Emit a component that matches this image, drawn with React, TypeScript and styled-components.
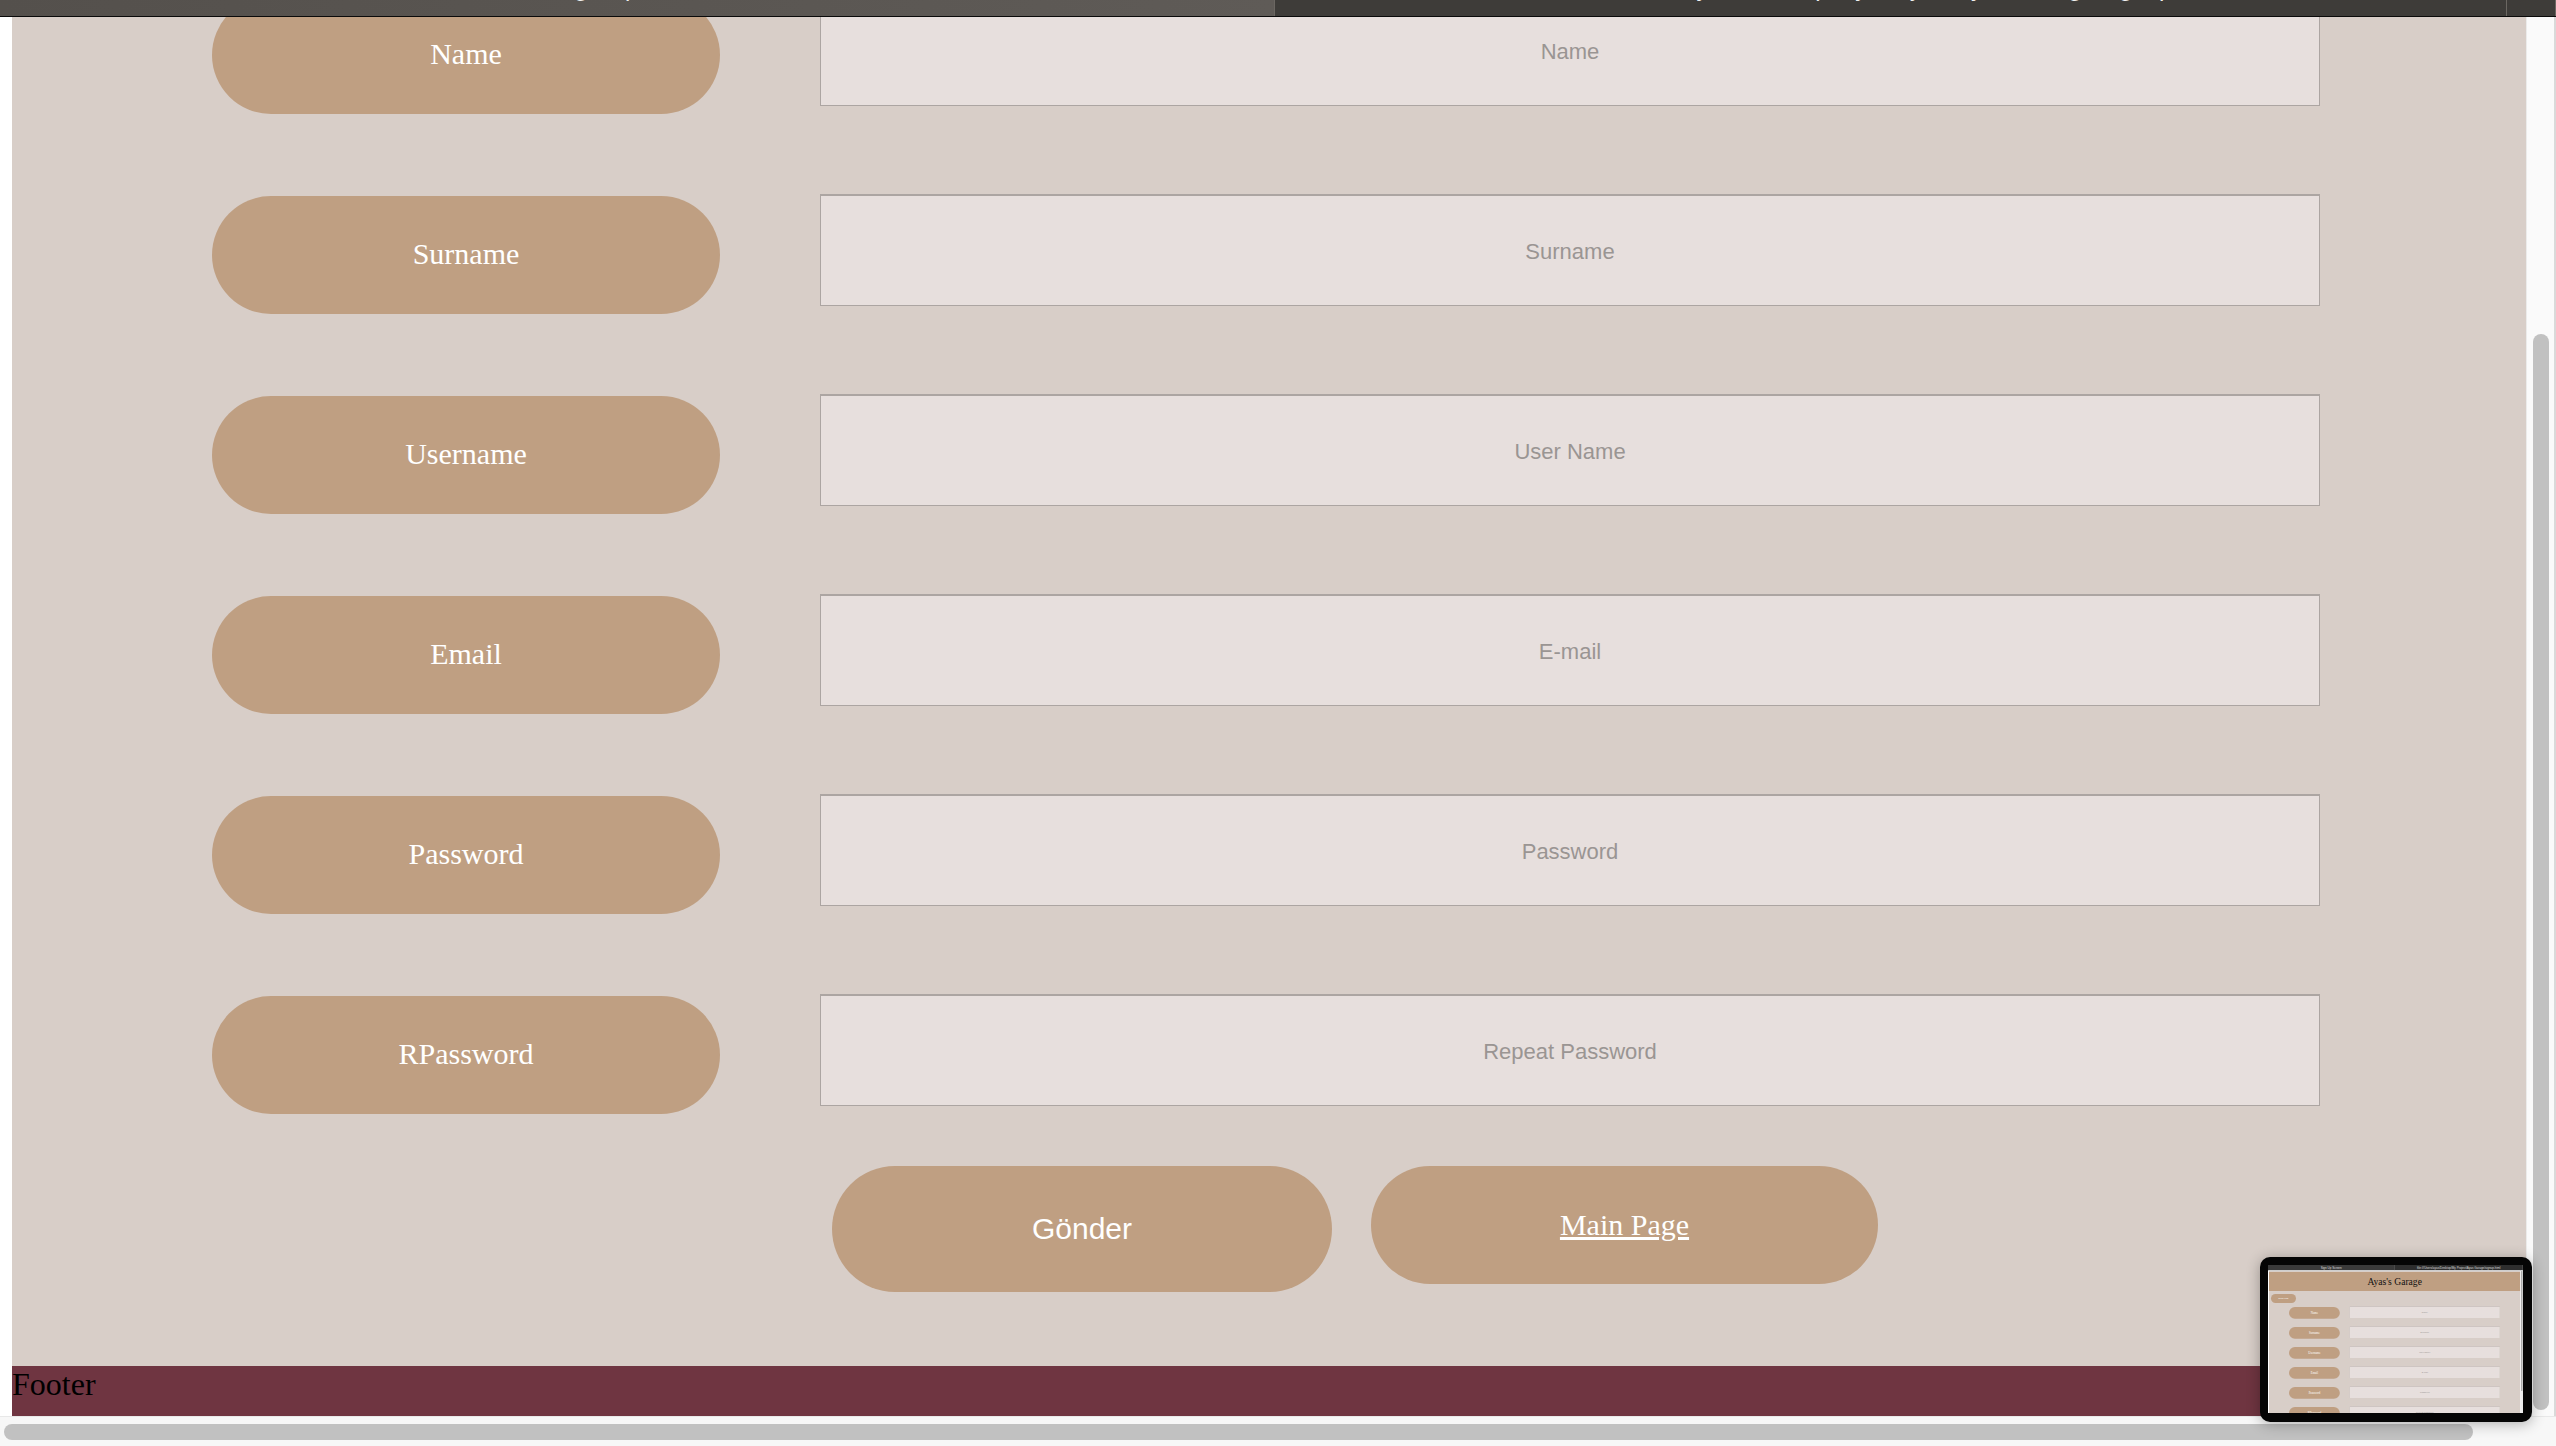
import React from "react";
import styled, { createGlobalStyle } from "styled-components";

const SERIF = `"Liberation Serif", "Times New Roman", serif`;
const SANS = `"Liberation Sans", Arial, sans-serif`;
const TAN = "#bf9f82";
const PAGE_BG = "#d8cec8";

const Global = createGlobalStyle`
  html, body { margin: 0; padding: 0; background: #fff; overflow: hidden; }
  #root { width: 2556px; height: 1446px; }
  * { box-sizing: border-box; }
`;

const Screen = styled.div`
  position: relative;
  width: 2556px;
  height: 1446px;
  display: flex;
  flex-direction: column;
  overflow: hidden;
  background: #fff;
`;

/* ---------- browser chrome ---------- */
const TabStrip = styled.div`
  height: 17px;
  flex: none;
  border-bottom: 1px solid #0a0a0a;
  display: grid;
  grid-template-columns: 1275px 1232px 1fr;
  background: #3e3c39;
  overflow: hidden;
`;

const Tab = styled.div<{ $active?: boolean }>`
  background: ${(p) => (p.$active ? "linear-gradient(90deg, #54504c, #5f5b57)" : "#3e3c39")};
  border-right: 1px solid #6b6762;
  display: flex;
  align-items: flex-start;
  justify-content: center;
  overflow: hidden;
`;

const TabTitle = styled.span`
  font: 24px/24px ${SANS};
  color: #f0f0f0;
  margin-top: -24px;
  white-space: nowrap;
`;

const Middle = styled.div`
  flex: 1;
  min-height: 0;
  display: flex;
`;

const LeftEdge = styled.div<{ $w: number }>`
  width: ${(p) => p.$w}px;
  flex: none;
  background: #fff;
`;

const Viewport = styled.div`
  flex: 1;
  min-width: 0;
  background: ${PAGE_BG};
  overflow: hidden;
  display: flex;
  flex-direction: column;
`;

const VTrack = styled.div`
  width: 30px;
  flex: none;
  background: #fafafa;
  border-left: 1px solid #ebebeb;
  border-right: 2px solid #d9d9d9;
  padding-top: 317px;
  display: flex;
  justify-content: center;
`;

const VThumb = styled.div`
  width: 16px;
  height: 1076px;
  border-radius: 8px;
  background: #c1c1c1;
`;

const HTrack = styled.div`
  height: 30px;
  flex: none;
  background: #f7f7f7;
  border-top: 1px solid #e8e8e8;
  padding: 7px 0 0 4px;
`;

const HThumb = styled.div`
  width: 2469px;
  height: 16px;
  border-radius: 8px;
  background: #c1c1c1;
`;

/* ---------- page ---------- */
const PageRoot = styled.div<{ $offset: number }>`
  width: 2514px;
  flex: none;
  margin-top: ${(p) => -p.$offset}px;
  padding-top: 10px;
  display: flex;
  flex-direction: column;
  background: ${PAGE_BG};
`;

const Header = styled.header`
  height: 190px;
  background: ${TAN};
  display: flex;
  align-items: center;
  justify-content: center;
`;

const Title = styled.h1`
  margin: 0;
  font: 400 96px/1 ${SERIF};
  color: #111;
`;

const NavRow = styled.nav`
  margin-top: 30px;
  padding-left: 20px;
  display: flex;
`;

const NavPill = styled.a`
  width: 250px;
  height: 90px;
  border-radius: 45px;
  background: ${TAN};
  color: #fff;
  font: 24px ${SERIF};
  display: flex;
  align-items: center;
  justify-content: center;
  text-decoration: none;
`;

const Form = styled.form`
  margin: 38px 0 0;
  display: flex;
  flex-direction: column;
  gap: 80px;
`;

const Row = styled.div`
  height: 120px;
  padding-left: 200px;
  display: flex;
  align-items: flex-start;
  gap: 100px;
`;

const LabelPill = styled.label`
  width: 508px;
  height: 118px;
  margin-top: 2px;
  padding-bottom: 2px;
  flex: none;
  border-radius: 59px;
  background: ${TAN};
  color: #fff;
  font: 30px ${SERIF};
  display: flex;
  align-items: center;
  justify-content: center;
`;

const Field = styled.input`
  width: 1500px;
  height: 112px;
  flex: none;
  margin: 0;
  padding: 2px 0 0;
  background: #e7dfdd;
  border: 1px solid #aca5a2;
  border-top-width: 2px;
  outline: none;
  text-align: center;
  font: 22px ${SANS};
  color: #333;
  &::placeholder {
    color: #9a9593;
  }
`;

const Actions = styled.div`
  margin-top: 52px;
  padding-left: 820px;
  display: flex;
  align-items: flex-start;
  gap: 39px;
`;

const SubmitButton = styled.button`
  width: 500px;
  height: 126px;
  border: none;
  border-radius: 63px;
  background: ${TAN};
  color: #fff;
  font: 30px ${SANS};
  padding: 0;
`;

const HomeLink = styled.a`
  width: 507px;
  height: 118px;
  border-radius: 59px;
  background: ${TAN};
  color: #fff;
  font: 30px ${SERIF};
  text-decoration: underline;
  display: flex;
  align-items: center;
  justify-content: center;
`;

const Footer = styled.footer`
  margin-top: 74px;
  height: 50px;
  background: #6f3541;
  color: #000;
  font: 32px/1.15 ${SERIF};
`;

/* ---------- screenshot thumbnail ---------- */
const MiniFrame = styled.div`
  position: absolute;
  left: 2260px;
  top: 1257px;
  width: 272px;
  height: 165px;
  padding: 8px 9px 9px 8px;
  background: #050505;
  border-radius: 10px;
  box-shadow: 0 2px 14px rgba(0, 0, 0, 0.3);
`;

const MiniScreen = styled.div`
  width: 255px;
  height: 148px;
  overflow: hidden;
  background: #fff;
`;

const MiniScaler = styled.div`
  width: 2550px;
  height: 1480px;
  transform: scale(0.1);
  transform-origin: 0 0;
  display: flex;
  flex-direction: column;
`;

const MiniChrome = styled.div`
  height: 60px;
  flex: none;
  display: grid;
  grid-template-columns: 1270px 1fr;
  background: #333;
  border-bottom: 8px solid #fff;
  overflow: hidden;
`;

const MiniTab = styled.div<{ $active?: boolean }>`
  background: ${(p) => (p.$active ? "#3a3a3a" : "#2e2e2e")};
  border-right: 6px solid #555;
  display: flex;
  align-items: center;
  justify-content: center;
  font: 30px ${SANS};
  color: #ddd;
  white-space: nowrap;
  overflow: hidden;
`;

const MiniBody = styled.div`
  flex: 1;
  min-height: 0;
  display: flex;
  overflow: hidden;
`;

const MiniViewport = styled.div`
  width: 2514px;
  flex: none;
  overflow: hidden;
  display: flex;
  flex-direction: column;
`;

const MiniTrack = styled.div`
  flex: 1;
  background: #ececec;
  padding: 0 8px;
  display: flex;
  justify-content: center;
`;

const MiniThumb = styled.div`
  width: 12px;
  height: 1200px;
  background: #9c9c9c;
  border-radius: 6px;
`;

const fields = [
  { label: "Name", placeholder: "Name", type: "text" },
  { label: "Surname", placeholder: "Surname", type: "text" },
  { label: "Username", placeholder: "User Name", type: "text" },
  { label: "Email", placeholder: "E-mail", type: "email" },
  { label: "Password", placeholder: "Password", type: "password" },
  { label: "RPassword", placeholder: "Repeat Password", type: "password" },
];

function Page({ offset }: { offset: number }) {
  return (
    <PageRoot $offset={offset}>
      <Header>
        <Title>Ayas's Garage</Title>
      </Header>
      <NavRow>
        <NavPill href="#">Main Page</NavPill>
      </NavRow>
      <Form onSubmit={(e) => e.preventDefault()}>
        {fields.map((f) => (
          <Row key={f.label}>
            <LabelPill>{f.label}</LabelPill>
            <Field type={f.type} placeholder={f.placeholder} />
          </Row>
        ))}
      </Form>
      <Actions>
        <SubmitButton type="button">Gönder</SubmitButton>
        <HomeLink href="#">Main Page</HomeLink>
      </Actions>
      <Footer>Footer</Footer>
    </PageRoot>
  );
}

export default function App() {
  return (
    <>
      <Global />
      <Screen>
        <TabStrip>
          <Tab $active>
            <TabTitle>Sign Up Screen</TabTitle>
          </Tab>
          <Tab>
            <TabTitle>file:///Users/ayas/Desktop/My Project/Ayas Garage/signup.html</TabTitle>
          </Tab>
          <Tab />
        </TabStrip>
        <Middle>
          <LeftEdge $w={12} />
          <Viewport>
            <Page offset={381} />
          </Viewport>
          <VTrack>
            <VThumb />
          </VTrack>
        </Middle>
        <HTrack>
          <HThumb />
        </HTrack>

        <MiniFrame>
          <MiniScreen>
            <MiniScaler>
              <MiniChrome>
                <MiniTab $active>Sign Up Screen</MiniTab>
                <MiniTab>file:///Users/ayas/Desktop/My Project/Ayas Garage/signup.html</MiniTab>
              </MiniChrome>
              <MiniBody>
                <LeftEdge $w={10} />
                <MiniViewport>
                  <Page offset={0} />
                </MiniViewport>
                <MiniTrack>
                  <MiniThumb />
                </MiniTrack>
              </MiniBody>
            </MiniScaler>
          </MiniScreen>
        </MiniFrame>
      </Screen>
    </>
  );
}
